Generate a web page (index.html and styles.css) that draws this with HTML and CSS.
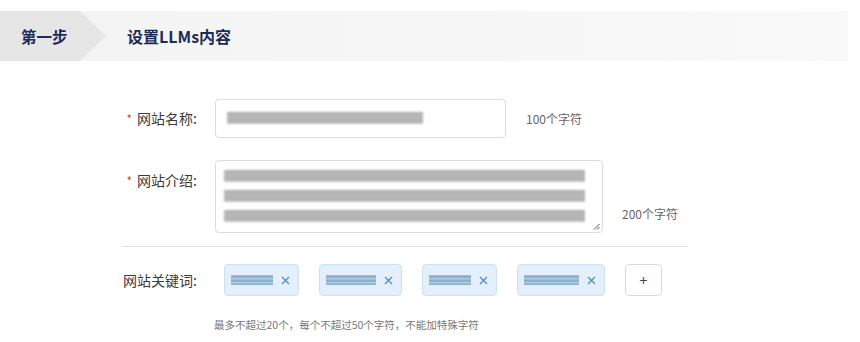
FILE: index.html
```html
<!DOCTYPE html>
<html lang="zh-CN">
<head>
  <meta charset="UTF-8">
  <meta name="viewport" content="width=device-width, initial-scale=1.0">
  <title>设置LLMs内容</title>
  <link rel="stylesheet" href="styles.css">
</head>
<body>

<!-- Step header -->
<div class="step-bar">
  <div class="step-num">第一步</div>
  <div class="step-title">设置LLMs内容</div>
</div>

<div class="form">
  <div class="form-row row-name">
    <label class="form-label"><span class="req">*</span>网站名称:</label>
    <div class="field field-input">
      <div class="blur-line" style="width: 196px"></div>
    </div>
    <span class="limit">100个字符</span>
  </div>

  <div class="form-row row-intro">
    <label class="form-label"><span class="req">*</span>网站介绍:</label>
    <div class="field field-area">
      <div class="blur-line"></div>
      <div class="blur-line"></div>
      <div class="blur-line"></div>
      <svg class="resize" width="7" height="7" viewBox="0 0 7 7">
        <path d="M6.5 1 L1 6.5 M6.5 4 L4 6.5" stroke="#555" stroke-width="1" fill="none"/>
      </svg>
    </div>
    <span class="limit limit-bottom">200个字符</span>
  </div>

  <div class="divider"></div>

  <div class="form-row row-keywords">
    <label class="form-label">网站关键词:</label>
    <div class="tags">
      <div class="tag"><span class="tag-blur" style="width: 42px"></span><svg class="tag-x" width="9" height="9" viewBox="0 0 9 9"><path d="M1 1 L8 8 M8 1 L1 8"/></svg></div>
      <div class="tag"><span class="tag-blur" style="width: 50px"></span><svg class="tag-x" width="9" height="9" viewBox="0 0 9 9"><path d="M1 1 L8 8 M8 1 L1 8"/></svg></div>
      <div class="tag"><span class="tag-blur" style="width: 42px"></span><svg class="tag-x" width="9" height="9" viewBox="0 0 9 9"><path d="M1 1 L8 8 M8 1 L1 8"/></svg></div>
      <div class="tag"><span class="tag-blur" style="width: 55px"></span><svg class="tag-x" width="9" height="9" viewBox="0 0 9 9"><path d="M1 1 L8 8 M8 1 L1 8"/></svg></div>
      <button class="tag-add">+</button>
    </div>
  </div>

  <p class="hint">最多不超过20个，每个不超过50个字符，不能加特殊字符</p>
</div>

</body>
</html>
```

FILE: styles.css
```css
body {
  margin: 0;
  padding: 0;
  background-color: #fff;
  font-family: "Noto Sans CJK SC", "Noto Sans", sans-serif;
  color: #3a3a3a;
}
.step-bar {
  display: flex;
  align-items: center;
  width: 848px;
  height: 50px;
  margin-top: 11px;
  background: linear-gradient(to right, #f3f3f3, #f7f7f7 60%, #f9f9f9);
}
.step-num {
  width: 106px;
  height: 50px;
  box-sizing: border-box;
  padding-left: 21px;
  line-height: 50px;
  font-size: 15.5px;
  font-weight: bold;
  color: #1d2b57;
  background-color: #e6e6e6;
  clip-path: polygon(0 0, 80px 0, 106px 25px, 80px 50px, 0 50px);
}
.step-title {
  margin-left: 21px;
  font-size: 16px;
  font-weight: bold;
  color: #1d2b57;
}
.form {
  padding-top: 38px;
}
.form-row {
  display: flex;
}
.form-label {
  width: 197px;
  margin-right: 18px;
  text-align: right;
  font-size: 14px;
  line-height: 20px;
  color: #3a3a3a;
}
.req {
  color: #e0453a;
  margin-right: 5px;
  font-size: 12px;
}
.field {
  position: relative;
  box-sizing: border-box;
  border: 1px solid #dcdcdc;
  border-radius: 4px;
  background: #fff;
}
.row-name {
  align-items: center;
}
.field-input {
  width: 291px;
  height: 39px;
  padding: 12px 0 0 11px;
}
.field-area {
  width: 388px;
  height: 73px;
  padding: 9px 17px 0 8px;
}
.blur-line {
  height: 12px;
  margin-bottom: 8px;
  background: repeating-linear-gradient(to bottom, #8a8a8a 0, #b8b8b8 2px, #9a9a9a 4px, #d0d0d0 6px);
  filter: blur(0.8px);
  opacity: 0.85;
}
.resize {
  position: absolute;
  right: 2px;
  bottom: 2px;
}
.limit {
  margin-left: 20px;
  font-size: 12px;
  color: #666;
}
.row-intro {
  margin-top: 22px;
  align-items: flex-start;
}
.row-intro .form-label {
  padding-top: 10px;
}
.limit-bottom {
  align-self: flex-end;
  margin-left: 19px;
  margin-bottom: 11px;
}
.divider {
  width: 566px;
  height: 1px;
  margin: 13px 0 0 122px;
  background-color: #e3e3e3;
}
.row-keywords {
  margin-top: 17px;
  align-items: center;
}
.tags {
  display: flex;
  gap: 20px;
  margin-left: 9px;
}
.tag {
  display: flex;
  align-items: center;
  height: 32px;
  box-sizing: border-box;
  padding: 0 8px 0 6px;
  gap: 8px;
  background-color: #e3effb;
  border: 1px solid #cde1f4;
  border-radius: 4px;
}
.tag-blur {
  display: block;
  height: 10px;
  background: repeating-linear-gradient(to bottom, #a9c6dc 0, #7fa6c6 2px, #c2d7e8 4px);
  filter: blur(0.7px);
}
.tag-x {
  stroke: #4a8bc9;
  stroke-width: 1.2;
  fill: none;
}
.tag-add {
  width: 37px;
  height: 32px;
  padding: 0;
  border: 1px solid #dadada;
  border-radius: 4px;
  background: #fff;
  font-size: 14px;
  color: #444;
  font-family: inherit;
}
.hint {
  margin: 21px 0 0 214px;
  font-size: 10.5px;
  line-height: 15px;
  color: #777;
}
```
